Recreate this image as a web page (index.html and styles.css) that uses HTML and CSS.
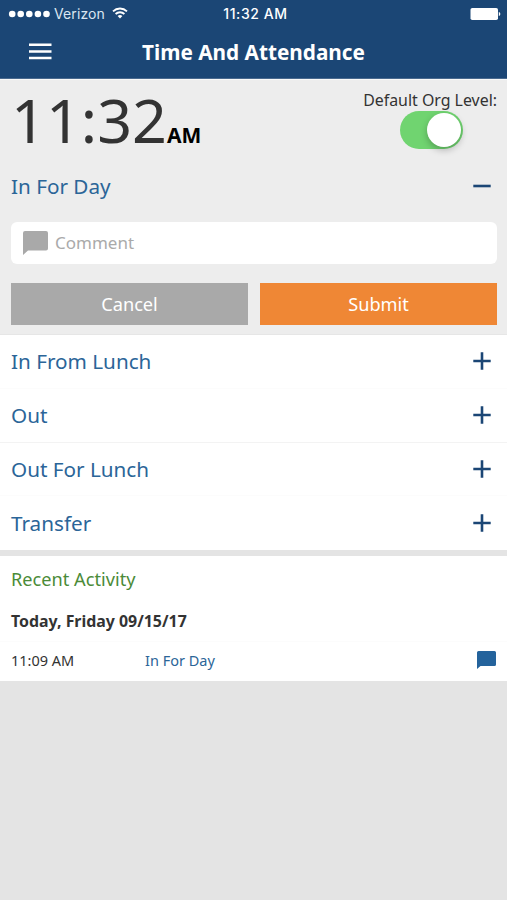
FILE: index.html
```html
<!DOCTYPE html>
<html lang="en">
<head>
<meta charset="utf-8">
<title>Time And Attendance</title>
<link rel="stylesheet" href="styles.css">
</head>
<body>
<header class="top">
  <div class="status">
    <div class="carrier">
      <svg class="signal" width="42" height="8" viewBox="0 0 42 8" fill="#fff"><circle cx="4.200" cy="4" r="3.300"/><circle cx="12.700" cy="4" r="3.300"/><circle cx="21.300" cy="4" r="3.300"/><circle cx="29.900" cy="4" r="3.300"/><circle cx="38.500" cy="4" r="3.300"/></svg>
      <span class="carrier-name">Verizon</span>
      <svg class="wifi" width="16" height="12" viewBox="0 0 16 12" fill="none" stroke="#fff" stroke-width="1.8"><path d="M1 4.3a10.2 10.2 0 0 1 14 0"/><path d="M3.6 7a6.4 6.4 0 0 1 8.8 0"/><path d="M5.6 9.1a3.6 3.6 0 0 1 4.8 0L8 11.6z" fill="#fff" stroke="none"/></svg>
    </div>
    <span class="clock">11:32 AM</span>
    <svg class="battery" width="31" height="12" viewBox="0 0 31 12" fill="#fff"><rect x=".5" width="27.5" height="12" rx="1.8"/><path d="M28.8 4c2 .5 2 3.500 0 4z"/></svg>
  </div>
  <div class="nav">
    <svg class="menu" width="23" height="17" viewBox="0 0 23 17" fill="#fff"><path d="M0 .5h22.500V3H0zM0 7.200h22.500v2.500H0zM0 13.700h22.500v2.500H0z"/></svg>
    <h1>Time And Attendance</h1>
  </div>
</header>
<main>
  <section class="punch">
    <div class="now">
      <div class="time">11:32<b>AM</b></div>
      <div class="org"><span class="org-label">Default Org Level:</span><span class="switch"><i></i></span></div>
    </div>
    <div class="open-row"><span class="label">In For Day</span><svg class="sign" width="18" height="18" viewBox="0 0 18 18"><path d="M.3 9h17.400"/></svg></div>
    <div class="comment"><svg width="25" height="24" viewBox="0 0 25 24" fill="#a9a9a9"><path d="M2 0h21a2 2 0 0 1 2 2v15.500a2 2 0 0 1-2 2H5L0 24V2a2 2 0 0 1 2-2z"/></svg><span class="hint">Comment</span></div>
    <div class="buttons"><button class="cancel"><span>Cancel</span></button><button class="submit"><span>Submit</span></button></div>
  </section>
  <ul class="actions">
    <li><span class="label">In From Lunch</span><svg class="sign" width="18" height="18" viewBox="0 0 18 18"><path d="M.3 9h17.400M9 .3v17.400"/></svg></li>
    <li><span class="label">Out</span><svg class="sign" width="18" height="18" viewBox="0 0 18 18"><path d="M.3 9h17.400M9 .3v17.400"/></svg></li>
    <li><span class="label">Out For Lunch</span><svg class="sign" width="18" height="18" viewBox="0 0 18 18"><path d="M.3 9h17.400M9 .3v17.400"/></svg></li>
    <li><span class="label">Transfer</span><svg class="sign" width="18" height="18" viewBox="0 0 18 18"><path d="M.3 9h17.400M9 .3v17.400"/></svg></li>
  </ul>
  <section class="recent">
    <h2>Recent Activity</h2>
    <h3>Today, Friday 09/15/17</h3>
    <div class="entry"><span class="at">11:09 AM</span><span class="what">In For Day</span><svg width="19" height="18" viewBox="0 0 19 18" fill="#24639c"><path d="M1.500 0h16A1.500 1.500 0 0 1 19 1.500v12a1.500 1.500 0 0 1-1.500 1.500H3.500L0 18V1.500A1.500 1.500 0 0 1 1.500 0z"/></svg></div>
  </section>
</main>
</body>
</html>
```

FILE: styles.css
```css
* { box-sizing: border-box; }
body { margin: 0; min-height: 900px; background: #e4e4e4; font-family: "Noto Sans", sans-serif; color: #333; }
h1, h2, h3, ul { margin: 0; padding: 0; font-weight: 400; }
svg { display: block; flex: none; }
span, h1, h2, h3 { white-space: nowrap; }
.top { height: 79px; background: #1b4675; color: #fff; border-bottom: 1px solid #4a6a8f; }
.status { height: 27px; display: grid; grid-template-columns: 1fr auto 1fr; align-items: center; padding: 0 6px 0 8px; font-family: Inter, sans-serif; font-size: 14px; }
.carrier { display: flex; align-items: center; }
.carrier-name { margin-left: 4px; color: #dbe6f2; font-size: 14px; letter-spacing: .1px; }
.wifi { margin-left: 7px; margin-top: -2px; }
.clock { font-weight: 500; letter-spacing: .6px; padding-left: 2px; }
.battery { justify-self: end; }
.nav { height: 51px; display: grid; grid-template-columns: 29px 1fr 29px; align-items: center; padding: 0 0 2px; }
.menu { margin-left: 29px; }
h1 { font-size: 20.750px; font-weight: 700; text-align: center; }
.punch { height: 256px; background: #ededed; padding: 0 10px 0 11px; border-top: 1px solid #f8f8f8; border-bottom: 1px solid #e6e6e6; }
.now { height: 80px; display: flex; justify-content: space-between; }
.time { font-size: 61px; line-height: 79px; height: 80px; white-space: nowrap; }
.time b { font-size: 21px; color: #000; }
.org { display: flex; flex-direction: column; align-items: flex-end; padding-top: 10px; }
.org-label { font-size: 15.900px; line-height: 21px; }
.switch { width: 63px; height: 38px; margin-right: 34px; border-radius: 19px; background: #70d470; display: flex; justify-content: flex-end; padding: 2px; }
.switch i { width: 34px; height: 34px; border-radius: 50%; background: #fff; box-shadow: 0 3px 7px rgba(0,0,0,.25); }
.label { font-size: 20.700px; color: #2b6598; }
.sign { stroke: #1b4675; stroke-width: 2.600; fill: none; margin-right: 6px; }
.open-row { height: 51px; display: flex; align-items: center; justify-content: space-between; }
.comment { height: 42px; margin-top: 11px; border-radius: 6px; background: #fff; display: flex; align-items: center; padding-left: 12px; gap: 7px; }
.hint { font-size: 17px; line-height: 24px; padding-bottom: 1px; color: #aaa; }
.buttons { display: grid; grid-template-columns: 1fr 1fr; gap: 12px; margin-top: 19px; }
button { height: 42px; border: 0; padding: 0; border-radius: 0; font: 18.200px "Noto Sans", sans-serif; color: #fff; }
.cancel { background: #a9a9a9; }
.submit { background: #ef8735; }
.actions { list-style: none; background: #fff; height: 215px; }
.actions li { height: 53.750px; display: flex; align-items: center; justify-content: space-between; padding: 0 10px 0 11px; border-bottom: 1px solid #fcfcfc; }
.actions li:nth-child(2) { border-bottom-color: #f3f3f3; }
.actions li:last-child { border-bottom: 0; }
.recent { margin-top: 6px; height: 125px; background: #fff; padding: 0 11px; }
h2 { font-size: 18.200px; line-height: 47px; color: #4b8b38; }
h3 { font-size: 15.900px; font-weight: 700; line-height: 37px; height: 38px; }
.entry { height: 37px; display: grid; grid-template-columns: 134px 1fr auto; align-items: center; font-size: 14.500px; margin: 0 -11px; padding: 0 11px; border-top: 1px solid #fcfcfc; }
.what { color: #2b6598; }
```
